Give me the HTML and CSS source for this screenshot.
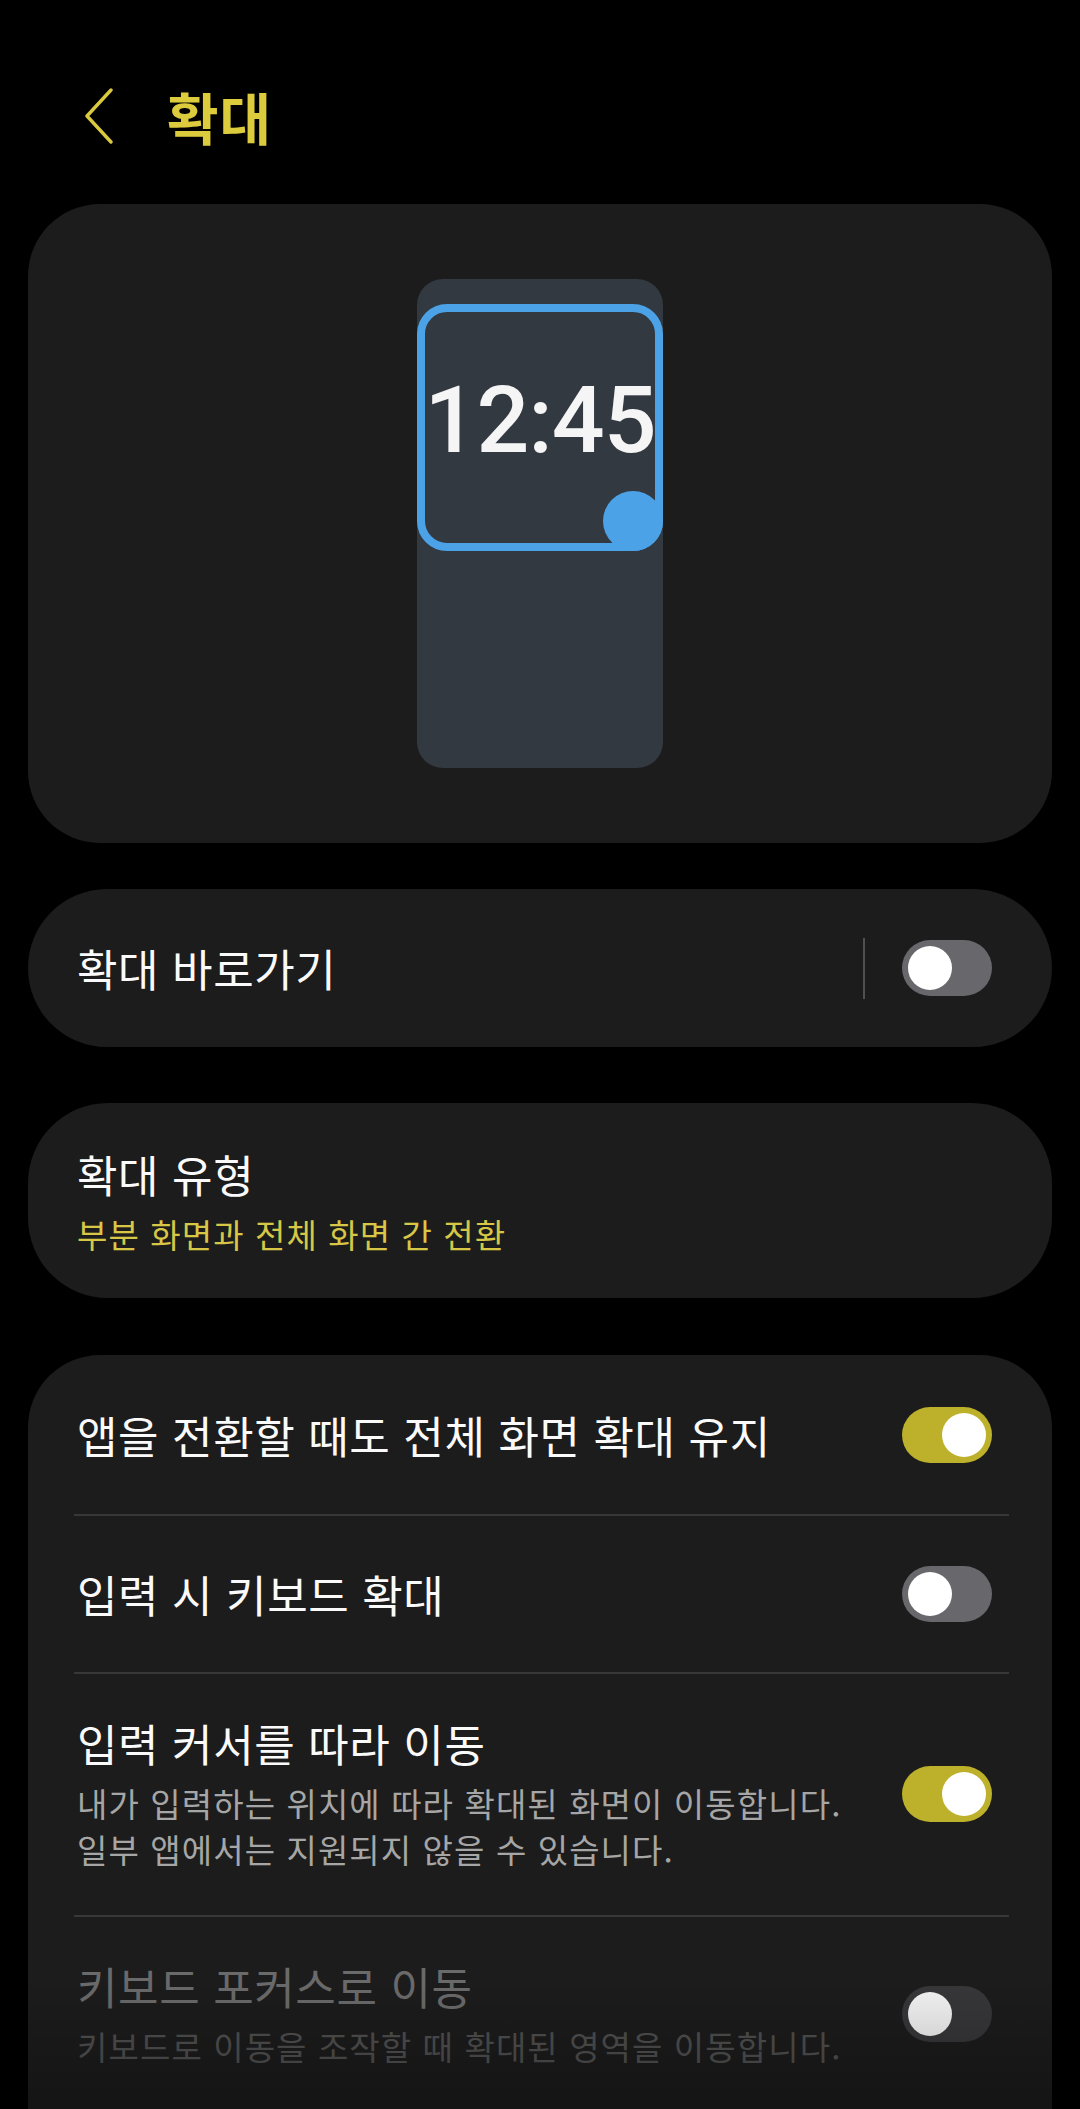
FILE: index.html
```html
<!DOCTYPE html>
<html lang="ko">
<head>
<meta charset="utf-8">
<title>확대</title>
<link rel="stylesheet" href="styles.css">
</head>
<body>
<div class="screen">
  <header class="appbar">
    <svg class="back" viewBox="0 0 30 56" width="30" height="56" aria-hidden="true">
      <path d="M27 2 L3 28 L27 54" fill="none" stroke="#d9c93e" stroke-width="3.4" stroke-linecap="round" stroke-linejoin="round"/>
    </svg>
    <h1 class="title">확대</h1>
  </header>

  <section class="card preview">
    <div class="phone">
      <div class="frame">
        <span class="time">12:45</span>
        <span class="handle"></span>
      </div>
    </div>
  </section>

  <section class="card pill shortcut">
    <span class="label">확대 바로가기</span>
    <span class="vline"></span>
    <span class="toggle off"></span>
  </section>

  <section class="card pill type">
    <div class="label">확대 유형</div>
    <div class="sub accent">부분 화면과 전체 화면 간 전환</div>
  </section>

  <section class="card list">
    <div class="row r1">
      <div class="text"><div class="label">앱을 전환할 때도 전체 화면 확대 유지</div></div>
      <span class="toggle on"></span>
    </div>
    <div class="divider"></div>
    <div class="row r2">
      <div class="text"><div class="label">입력 시 키보드 확대</div></div>
      <span class="toggle off"></span>
    </div>
    <div class="divider"></div>
    <div class="row r3">
      <div class="text">
        <div class="label">입력 커서를 따라 이동</div>
        <div class="sub">내가 입력하는 위치에 따라 확대된 화면이 이동합니다.<br>일부 앱에서는 지원되지 않을 수 있습니다.</div>
      </div>
      <span class="toggle on"></span>
    </div>
    <div class="divider"></div>
    <div class="row r4 disabled">
      <div class="text">
        <div class="label">키보드 포커스로 이동</div>
        <div class="sub">키보드로 이동을 조작할 때 확대된 영역을 이동합니다.</div>
      </div>
      <span class="toggle dis"></span>
    </div>
  </section>

  <div class="fade"></div>
</div>
</body>
</html>
```

FILE: styles.css
```css
* { box-sizing: border-box; }

html, body {
  margin: 0;
  padding: 0;
  background: #000;
}

body {
  font-family: "Noto Sans CJK KR", "Noto Sans", sans-serif;
  color: #fafafa;
}

.screen {
  position: relative;
  width: 1080px;
  height: 2109px;
  overflow: hidden;
  background: #000;
}

/* header */
.appbar {
  height: 204px;
  padding-top: 28px;
  padding-left: 84px;
  display: flex;
  align-items: center;
}

.back {
  display: block;
  flex: none;
}

.title {
  margin: 0 0 0 53px;
  font-size: 56px;
  font-weight: 700;
  color: #dccb3c;
  line-height: 1;
  letter-spacing: 1px;
}

/* cards */
.card {
  margin: 0 28px;
  background: #1c1c1c;
  border-radius: 72px;
}

.preview {
  height: 639px;
  display: flex;
  align-items: center;
  justify-content: center;
}

.phone {
  width: 246px;
  height: 489px;
  background: #333941;
  border-radius: 26px;
  padding-top: 25px;
}

.frame {
  position: relative;
  width: 100%;
  height: 247px;
  border: 8px solid #4ba2e6;
  border-radius: 30px;
  display: flex;
  justify-content: center;
  align-items: flex-start;
}

.time {
  margin-top: 62px;
  font-family: Roboto, "Liberation Sans", sans-serif;
  font-weight: 500;
  font-size: 93px;
  line-height: 1;
  color: #f5f5f5;
  letter-spacing: -1px;
}

.handle {
  position: absolute;
  right: -8px;
  bottom: -8px;
  width: 60px;
  height: 60px;
  border-radius: 50%;
  background: #4ba2e6;
}

.pill { border-radius: 80px; }

.shortcut {
  margin-top: 46px;
  height: 158px;
  display: flex;
  align-items: center;
  padding: 0 60px 0 49px;
}

.label {
  font-size: 44px;
  line-height: 56px;
  color: #fafafa;
  letter-spacing: 0.6px;
}

.shortcut .label { flex: 1; }

.vline {
  width: 2px;
  height: 61px;
  background: #505050;
  margin-right: 37px;
}

.type {
  margin-top: 56px;
  height: 195px;
  padding: 43px 60px 39px 49px;
}

.sub {
  margin-top: 9px;
  font-size: 33px;
  line-height: 46px;
  color: #a6a6a6;
  letter-spacing: 1.1px;
}

.sub.accent { color: #d8c747; }

/* toggles */
.toggle {
  position: relative;
  flex: none;
  width: 90px;
  height: 56px;
  border-radius: 28px;
  background: #67676c;
}

.toggle::after {
  content: "";
  position: absolute;
  top: 6px;
  left: 6px;
  width: 44px;
  height: 44px;
  border-radius: 50%;
  background: #ffffff;
}

.toggle.on { background: #bdb02a; }
.toggle.on::after { left: auto; right: 6px; }

.toggle.dis { background: #37373a; }
.toggle.dis::after { background: #f4f4f4; }

/* list card */
.list {
  margin-top: 57px;
  height: 900px;
  border-radius: 72px 72px 0 0;
}

.row {
  display: flex;
  align-items: center;
  padding: 0 60px 0 49px;
}

.row .text { flex: 1; }

.r1 { height: 159px; }
.r2 { height: 156px; }
.r3 { padding-top: 41px; padding-bottom: 43px; }
.r4 { padding-top: 41px; padding-bottom: 43px; }

.divider {
  height: 2px;
  margin: 0 43px 0 46px;
  background: #383838;
}

.disabled .label { color: #6a6a6a; }
.disabled .sub { color: #505050; }

.fade {
  position: absolute;
  left: 0;
  right: 0;
  bottom: 0;
  height: 130px;
  background: linear-gradient(to bottom, rgba(0,0,0,0) 0%, rgba(0,0,0,0.28) 100%);
  pointer-events: none;
}
```
